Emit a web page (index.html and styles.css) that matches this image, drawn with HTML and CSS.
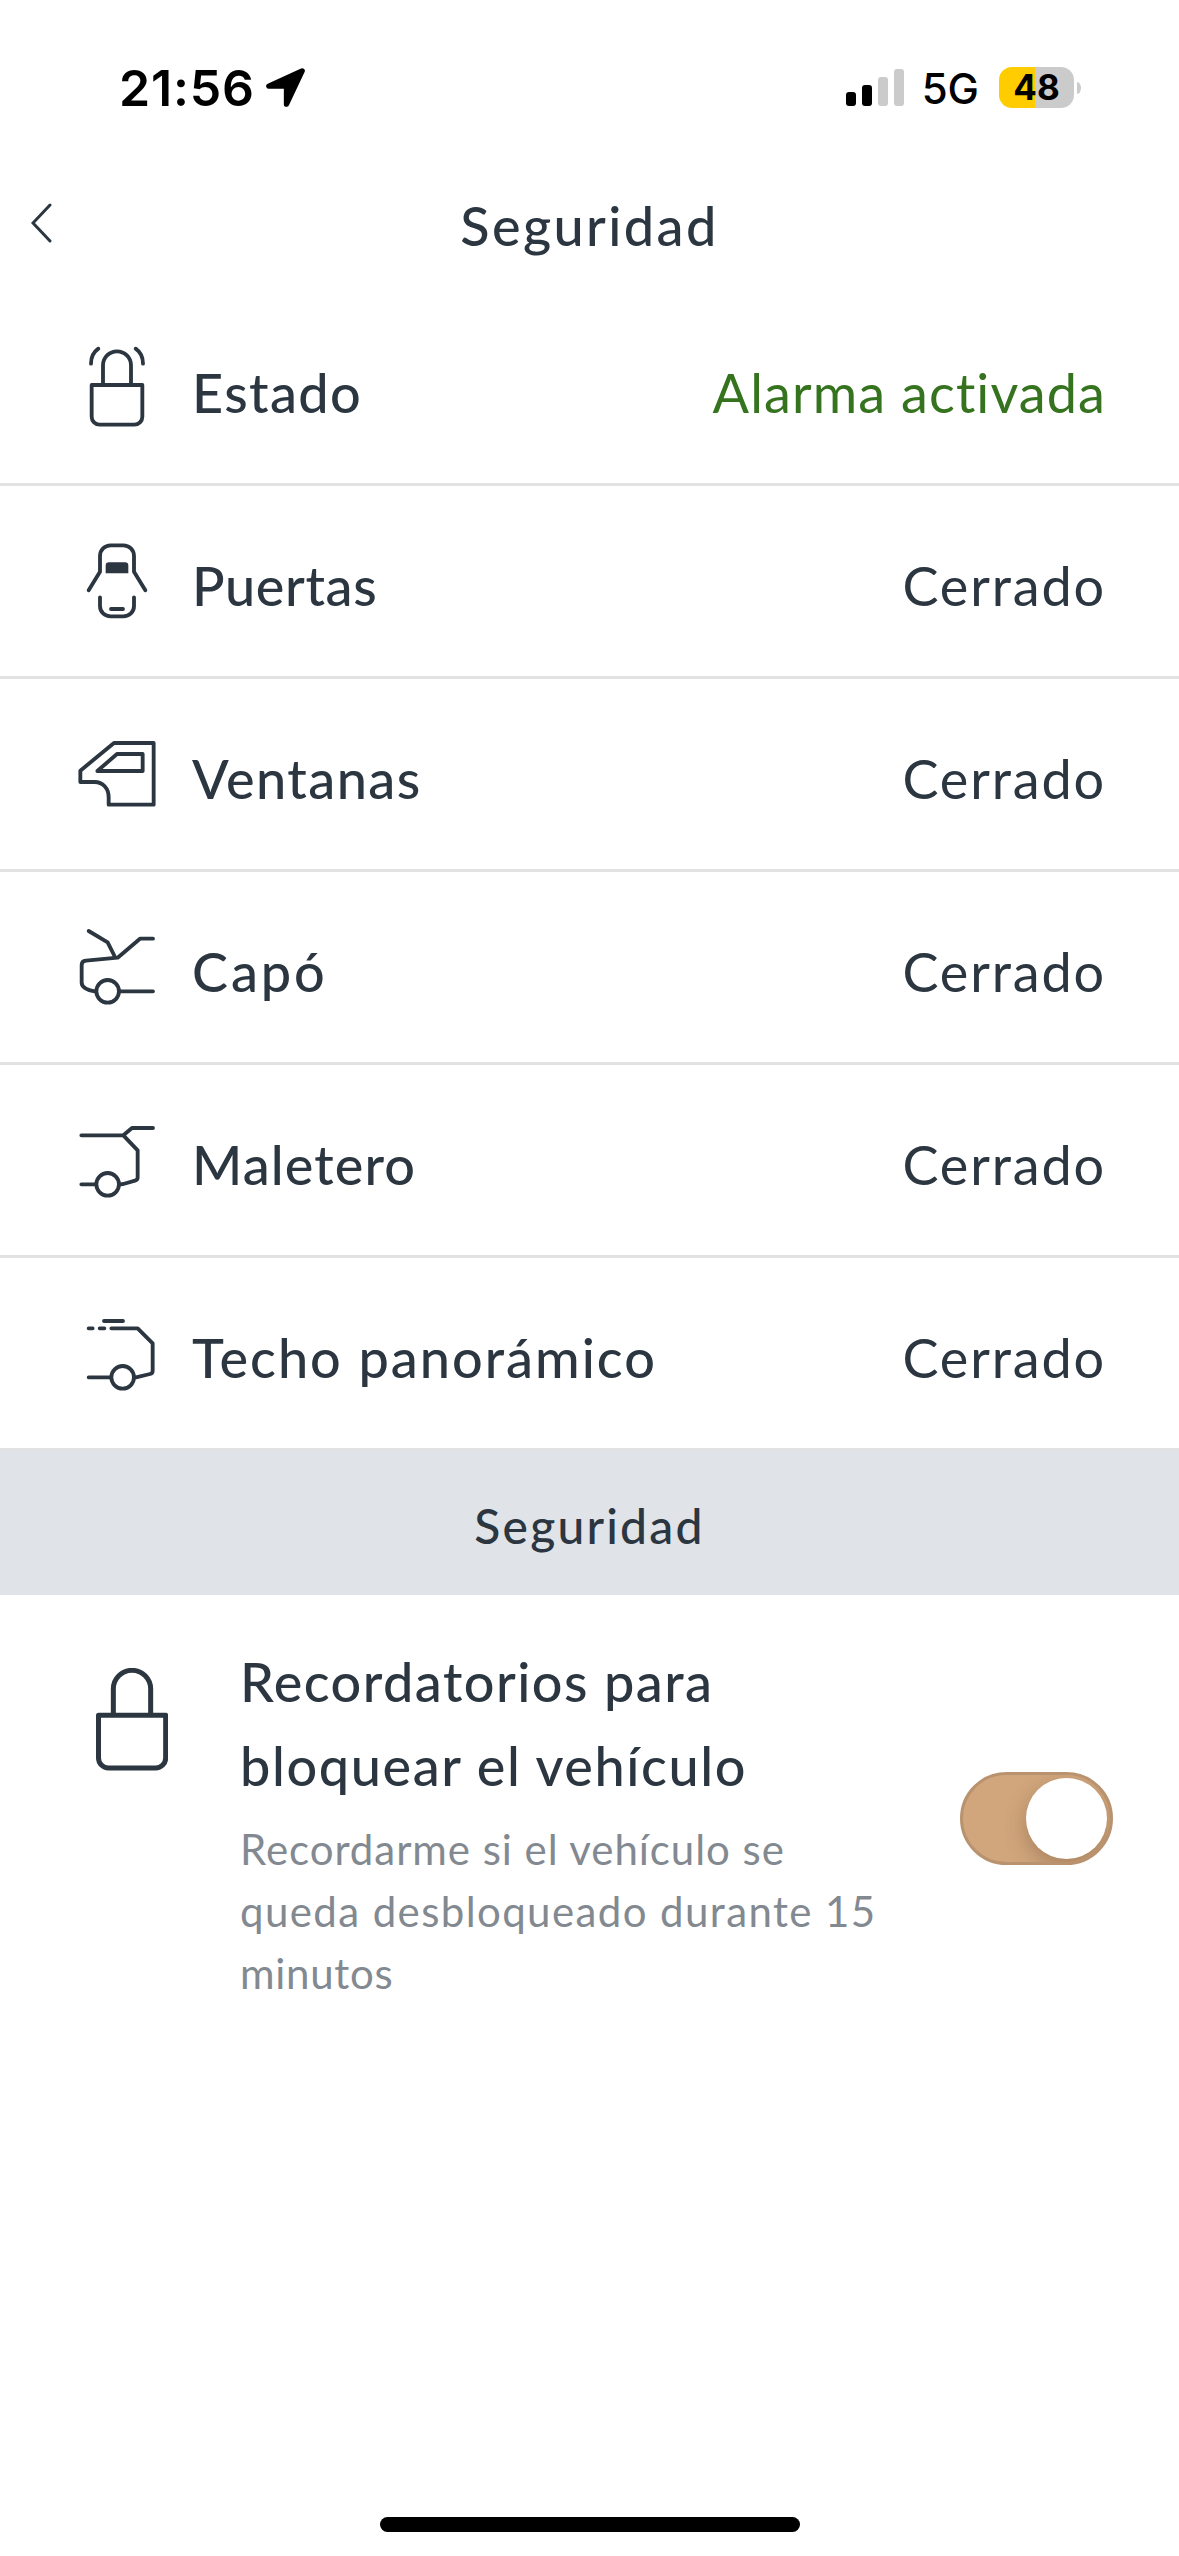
FILE: index.html
```html
<!DOCTYPE html>
<html lang="es">
<head>
<meta charset="utf-8">
<title>Seguridad</title>
<link rel="stylesheet" href="styles.css">
</head>
<body>
<div class="screen">
  <div class="status-bar">
    <span class="status-time">21:56</span>
    <svg class="status-location" viewBox="795 87 117 117" aria-hidden="true"><path d="M903.500 95.500 803.500 141.500H856.500V195.500Z"/></svg>
    <div class="status-right">
      <div class="signal"><i class="bar bar-1"></i><i class="bar bar-2"></i><i class="bar bar-3"></i><i class="bar bar-4"></i></div>
      <span class="network">5G</span>
      <span class="battery">48</span>
      <i class="battery-tip"></i>
    </div>
  </div>

  <header class="nav">
    <svg class="back" viewBox="0 0 22 40" aria-label="Atrás"><path d="M19 2 2 20 19 38"/></svg>
    <h1 class="nav-title">Seguridad</h1>
  </header>

  <ul class="list">
    <li class="row row-status">
      <svg class="row-icon" viewBox="36 69 270 270"><path d="M95 195H247V290A24 24 0 0 1 223 314H119A24 24 0 0 1 95 290ZM129 195V136A42 42 0 0 1 213 136V195M93 131C93 111 101 96 115 86M249 131C249 111 241 96 227 86"/></svg>
      <span class="row-label">Estado</span><span class="row-value is-armed">Alarma activada</span>
    </li>
    <li class="row row-doors">
      <svg class="row-icon" viewBox="36 648 270 270"><path d="M86 811 120 755V708C120 690 134 676 152 676H190C208 676 222 690 222 708V755L256 811M120 832V858C120 876 134 889 152 889H190C208 889 222 876 222 858V832M153 867H189"/><path class="solid" d="M137 760V737Q137 727 147 727H195Q205 727 205 737V760Z"/></svg>
      <span class="row-label">Puertas</span><span class="row-value">Cerrado</span>
    </li>
    <li class="row row-windows">
      <svg class="row-icon" viewBox="36 87 270 270"><path d="M162 129H281V314H146V292C146 265 128 246 104 246H61V212ZM171 162H248V213H112Z"/></svg>
      <span class="row-label">Ventanas</span><span class="row-value">Cerrado</span>
    </li>
    <li class="row row-hood">
      <svg class="row-icon" viewBox="36 666 270 270"><path d="M86 693 143 727 165 771M279 716H240L173 773 78 782Q65 783 65 795V848C65 862 80 870 108 875M181 874H279"/><circle cx="143" cy="874" r="34"/></svg>
      <span class="row-label">Capó</span><span class="row-value">Cerrado</span>
    </li>
    <li class="row row-trunk">
      <svg class="row-icon" viewBox="36 75 270 270"><path d="M64 136H190L216 114H279M190 136 233 181V262Q233 270 225 272L190 282 181 283M64 283H106"/><circle cx="143" cy="283" r="34"/></svg>
      <span class="row-label">Maletero</span><span class="row-value">Cerrado</span>
    </li>
    <li class="row row-roof">
      <svg class="row-icon" viewBox="36 654 270 270"><path d="M132 693H189M86 715H98M119 715H133M154 715H233L278 760V842Q278 850 270 852L228 862M86 862H151"/><circle cx="188" cy="862" r="34"/></svg>
      <span class="row-label">Techo panorámico</span><span class="row-value">Cerrado</span>
    </li>
  </ul>

  <h2 class="section-title">Seguridad</h2>

  <section class="reminder">
    <svg class="reminder-icon" viewBox="108 143 216 309"><path d="M115.500 285H317V413A30 30 0 0 1 287 443H145.500A30 30 0 0 1 115.500 413ZM160 285V206A56 56 0 0 1 272 206V285"/></svg>
    <div class="reminder-text">
      <h3 class="reminder-title">Recordatorios para<br><span class="title-b">bloquear el vehículo</span></h3>
      <p class="reminder-note"><span class="note-a">Recordarme si el vehículo se</span><br><span class="note-b">queda desbloqueado durante 15</span><br><span class="note-c">minutos</span></p>
    </div>
    <div class="toggle" role="switch" aria-checked="true"><span class="knob"></span></div>
  </section>

  <div class="home"><div class="home-indicator"></div></div>
</div>
</body>
</html>
```
FILE: styles.css
```css
* { box-sizing: border-box; }

body {
  margin: 0;
  background: #fff;
  color: #2b3641;
  font-family: Lato, "Liberation Sans", sans-serif;
}

h1, h2, h3, p, ul { margin: 0; padding: 0; font-weight: 500; }

.screen {
  width: 1179px;
  height: 2556px;
  display: flex;
  flex-direction: column;
  background: #fff;
}

/* status bar */
.status-bar {
  height: 155px;
  padding: 20px 98px 0 119px;
  display: flex;
  align-items: center;
  color: #000;
  font-family: Inter, "Liberation Sans", sans-serif;
}
.status-time {
  padding-top: 1px;
  font-size: 50px;
  font-weight: 600;
  letter-spacing: 0.8px;
  line-height: 60px;
}
.status-location {
  width: 39px;
  height: 39px;
  margin-left: 11px;
  stroke: #000;
  stroke-width: 16;
  stroke-linejoin: round;
}
.status-right { margin-left: auto; display: flex; align-items: center; }
.signal { display: flex; align-items: flex-end; gap: 6px; height: 37px; }
.bar { width: 10px; border-radius: 3px; background: #000; }
.bar-1 { height: 14px; }
.bar-2 { height: 21px; }
.bar-3 { height: 29px; background: #cbcbcb; }
.bar-4 { height: 37px; background: #cbcbcb; }
.network { margin-left: 18px; padding-top: 3px; font-size: 42px; font-weight: 450; line-height: 50px; }
.battery {
  margin-left: 20px;
  width: 75px;
  height: 41px;
  border-radius: 13px;
  background: linear-gradient(90deg, #fc0 36px, #cbcbcb 36px);
  font-size: 35px;
  font-weight: 700;
  line-height: 41px;
  text-align: center;
}
.battery-tip { margin-left: 3px; width: 4px; height: 12px; border-radius: 0 4px 4px 0 / 0 6px 6px 0; background: #cbcbcb; }

/* navigation header */
.nav {
  height: 138px;
  display: grid;
  grid-template-columns: 90px 1fr 90px;
  align-items: center;
}
.back {
  width: 22px;
  height: 40px;
  margin: -2px 0 0 31px;
  fill: none;
  stroke: #2b3641;
  stroke-width: 3;
  stroke-linecap: round;
}
.nav-title { padding-top: 4px; font-size: 54px; line-height: 84px; letter-spacing: 2.4px; text-align: center; }

/* list of vehicle states */
.list { list-style: none; }
.row {
  height: 193px;
  padding: 0 73px 0 72px;
  display: flex;
  align-items: center;
  border-bottom: 3px solid #e2e2e2;
  font-size: 54px;
  line-height: 84px;
}
.row-icon {
  width: 90px;
  height: 90px;
  margin-right: 30px;
  fill: none;
  stroke: #2b3641;
  stroke-width: 11.5;
  stroke-linecap: round;
  stroke-linejoin: round;
}
.row-icon .solid { fill: #2b3641; stroke: none; }
.row-label { padding-top: 10px; font-weight: 500; letter-spacing: 1.4px; }
.row-value { margin-left: auto; padding-top: 10px; font-weight: 400; letter-spacing: 1.85px; }
.row-value.is-armed { color: #36731f; letter-spacing: 1.1px; }
.row-doors .row-label { letter-spacing: 0.6px; }
.row-windows .row-label { letter-spacing: 1.4px; }
.row-hood .row-label { letter-spacing: 2.9px; }
.row-trunk .row-label { letter-spacing: 1.1px; }
.row-roof .row-label { letter-spacing: 2px; }

/* section heading band */
.section-title {
  height: 144px;
  padding-top: 4px;
  background: #e0e3e8;
  font-size: 48px;
  line-height: 142px;
  letter-spacing: 2.2px;
  text-align: center;
}

/* lock reminder */
.reminder { display: flex; align-items: flex-start; padding: 45px 66px 0 96px; }
.reminder-icon {
  width: 72px;
  height: 103px;
  margin-top: 28px;
  fill: none;
  stroke: #2b3641;
  stroke-width: 15;
  stroke-linejoin: round;
}
.reminder-text { margin-left: 72px; }
.reminder-title { font-size: 54px; line-height: 84px; letter-spacing: 1.45px; }
.title-b { letter-spacing: 1.6px; }
.reminder-note {
  margin-top: 10px;
  color: #838990;
  font-size: 42px;
  font-weight: 400;
  line-height: 62px;
}
.note-a { letter-spacing: 0.95px; }
.note-b { letter-spacing: 1.4px; }
.note-c { letter-spacing: 0.7px; }

.toggle {
  width: 153px;
  height: 93px;
  margin: 132px 0 0 auto;
  padding: 3px;
  display: flex;
  justify-content: flex-end;
  border: 3px solid #b99370;
  border-radius: 47px;
  background: #d1a67d;
  overflow: hidden;
}
.knob {
  width: 81px;
  height: 81px;
  border-radius: 50%;
  background: #fff;
  box-shadow: 0 8px 22px rgba(70, 45, 20, 0.3);
}

/* home indicator */
.home { margin-top: auto; padding-bottom: 24px; display: flex; justify-content: center; }
.home-indicator { width: 420px; height: 15px; border-radius: 8px; background: #000; }
```
